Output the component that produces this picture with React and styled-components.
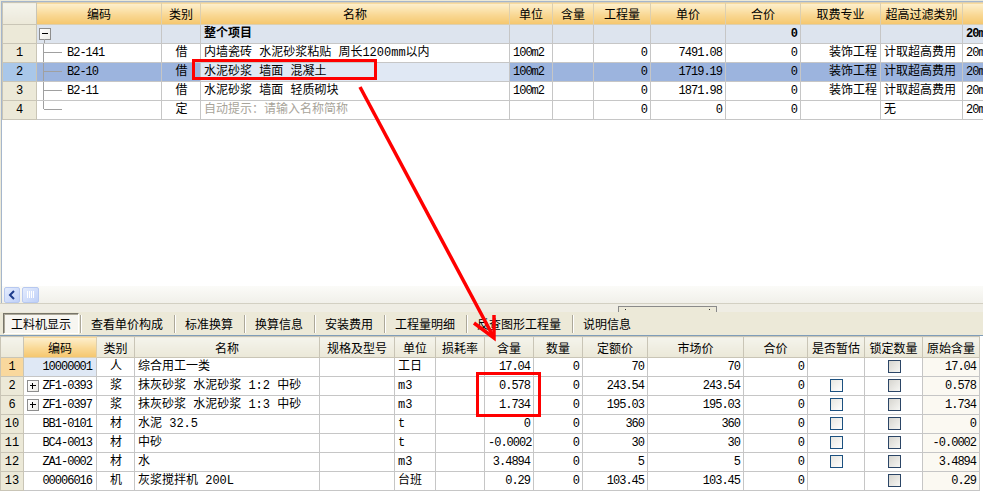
import React from "react";
import styled, { createGlobalStyle, css } from "styled-components";

const GlobalStyle = createGlobalStyle`
  *, *::before, *::after { box-sizing: border-box; }
  html, body { margin: 0; padding: 0; }
  body {
    background: #ece9d8;
    font-family: "Liberation Mono", "Noto Sans CJK SC", monospace;
    font-size: 12px;
    color: #000;
  }
`;

const Screen = styled.div`
  position: relative;
  width: 983px;
  height: 494px;
  overflow: hidden;
  display: flex;
  flex-direction: column;
  background: #ece9d8;
`;

const TopPanel = styled.section`
  height: 302px;
  margin: 1px 0 0 1px;
  display: flex;
  flex-direction: column;
  background: #fff;
  border-top: 1px solid #a5b6cc;
  border-left: 1px solid #a5b6cc;
  overflow: hidden;
`;

const GridArea = styled.div`
  flex: 1;
  overflow: hidden;
  background: #fff;
`;

const Grid = styled.table`
  table-layout: fixed;
  border-collapse: collapse;
  width: ${(p) => p.$width}px;
`;

const Col = styled.col`
  width: ${(p) => p.$w}px;
`;

const HeadRow = styled.tr`
  height: ${(p) => p.$h}px;
`;

const Th = styled.th`
  border: 1px solid ${(p) => (p.$hot ? "#dccfb0" : "#c9c5b6")};
  padding: 0;
  font-family: "Noto Sans CJK SC", sans-serif;
  font-weight: 400;
  font-size: 12px;
  text-align: center;
  white-space: nowrap;
  overflow: hidden;
  background: ${(p) =>
    p.$hot
      ? "linear-gradient(#fdf0cf, #f9d894 55%, #f5c66d)"
      : "linear-gradient(#f5f4ec, #ebe8d8)"};
`;

const tones = {
  group: "#dde4ee",
  selected: "#9cb4de",
};

const Row = styled.tr`
  height: 19px;
  background: ${(p) => tones[p.$tone] || "#fff"};
`;

const RowHead = styled.td`
  border: 1px solid #c9c5b6;
  padding: 0;
  text-align: center;
  line-height: 17px;
  background: ${(p) =>
    ({ selected: "#a9c7e9", active: "#f9d89d" }[p.$tone] || "#ece9d8")};
`;

const Td = styled.td`
  border: 1px solid #c6c6c6;
  padding: 0 ${(p) => (p.$align === "right" ? 3 : 2)}px 0 3px;
  line-height: 17px;
  white-space: nowrap;
  overflow: hidden;
  text-align: ${(p) => p.$align || "left"};
  font-weight: ${(p) => (p.$bold ? 700 : 400)};
  color: ${(p) => (p.$muted ? "#a8a49a" : "#000")};
  letter-spacing: ${(p) => (p.$mono ? "-1px" : "0")};
  background: ${(p) => p.$bg || "transparent"};
`;

const TreeWrap = styled.div`
  display: flex;
  align-items: center;
  height: 18px;
  letter-spacing: -1px;
`;

const Toggle = styled.span`
  position: relative;
  flex: none;
  width: 12px;
  height: 12px;
  margin-left: ${(p) => p.$inset || 0}px;
  border: 1px solid #8d8d8d;
  background: linear-gradient(135deg, #ffffff, #ecebe6);

  &::before {
    content: "";
    position: absolute;
    left: 2px;
    right: 2px;
    top: 4px;
    border-top: 1px solid #000;
  }

  ${(p) =>
    p.$plus
      ? css`
          &::after {
            content: "";
            position: absolute;
            top: 2px;
            bottom: 2px;
            left: 4px;
            border-left: 1px solid #000;
          }
        `
      : css`
          &::after {
            content: "";
            position: absolute;
            left: 4px;
            top: 100%;
            height: 6px;
            border-left: 1px solid #a0a0a0;
          }
        `}
`;

const Branch = styled.span`
  position: relative;
  flex: none;
  align-self: flex-start;
  width: 19px;
  height: ${(p) => (p.$last ? 9 : 19)}px;
  margin: -1px 5px 0 3px;
  border-left: 1px solid #a0a0a0;

  &::after {
    content: "";
    position: absolute;
    left: 0;
    right: 0;
    top: 9px;
    border-top: 1px solid #a0a0a0;
  }
`;

const CodeWrap = styled.div`
  display: flex;
  align-items: center;
  height: 18px;
  letter-spacing: -1px;

  & > span:last-child {
    margin-left: auto;
    padding-right: 2px;
  }
`;

const HScroll = styled.div`
  height: 17px;
  flex: none;
  display: flex;
  align-items: center;
  gap: 2px;
  padding-left: 2px;
  background: linear-gradient(#fbfbf8, #f1f0ea);
`;

const ScrollBtn = styled.div`
  width: ${(p) => p.$w}px;
  height: 16px;
  border: 1px solid #b7c8f0;
  border-radius: 2px;
  background: linear-gradient(135deg, #e4ecfd, #bfd0f8);
  display: flex;
  align-items: center;
  justify-content: center;
`;

const Splitter = styled.div`
  height: 9px;
  flex: none;
  border-top: 1px solid #d3d0c3;
  background: #efede4;
  display: flex;
  align-items: flex-end;
`;

const Grip = styled.div`
  position: relative;
  margin-left: 618px;
  width: 99px;
  height: 6px;
  border: 1px solid #8a8a8a;
  border-bottom: none;
  background: #ece9d8;

  &::before,
  &::after {
    content: "";
    position: absolute;
    top: 2px;
    width: 1px;
    height: 1px;
    background: #333;
  }
  &::before {
    left: 6px;
  }
  &::after {
    right: 6px;
  }
`;

const TabBar = styled.nav`
  height: 23px;
  flex: none;
  display: flex;
  align-items: center;
  padding-left: 3px;
  background: #ece9d8;
`;

const Tab = styled.div`
  height: 18px;
  line-height: 18px;
  padding: 0 11px 0 10px;
  font-family: "Noto Sans CJK SC", sans-serif;
  font-size: 12px;
  white-space: nowrap;
  border-left: 1px solid #aca899;
  box-shadow: inset 1px 0 #fff;

  ${(p) =>
    p.$active &&
    css`
      height: 21px;
      line-height: 19px;
      padding: 0 7px;
      margin-right: 1px;
      background: #f7f6f1;
      border: 1px solid;
      border-color: #77756a #fff #fff #77756a;
      box-shadow: inset 1px 1px #aca899;
    `}
`;

const BottomPanel = styled.section`
  flex: 1;
  overflow: hidden;
  background: #fff;
  border-top: 1px solid #7f9db9;
`;

const Check = styled.span`
  display: inline-block;
  vertical-align: middle;
  width: 13px;
  height: 13px;
  border: 1px solid ${(p) => (p.$locked ? "#2b4566" : "#1c5180")};
  background: ${(p) =>
    p.$locked
      ? "linear-gradient(135deg, #d6d5cf, #f6f6f3)"
      : "linear-gradient(135deg, #e7e6e0, #ffffff)"};
`;

const Overlay = styled.svg`
  position: absolute;
  inset: 0;
  pointer-events: none;
`;

const topCols = [34, 125, 39, 309, 43, 41, 57, 75, 75, 80, 82, 60];
const topHeads = ["", "编码", "类别", "名称", "单位", "含量", "工程量", "单价", "合价", "取费专业", "超高过滤类别", ""];

const topRows = [
  { n: "1", code: "B2-141", kind: "借", name: "内墙瓷砖 水泥砂浆粘贴 周长1200mm以内", unit: "100m2", qty: "0", price: "7491.08", total: "0", major: "装饰工程", filter: "计取超高费用" },
  { n: "2", code: "B2-10", kind: "借", name: "水泥砂浆 墙面 混凝土", unit: "100m2", qty: "0", price: "1719.19", total: "0", major: "装饰工程", filter: "计取超高费用", tone: "selected" },
  { n: "3", code: "B2-11", kind: "借", name: "水泥砂浆 墙面 轻质砌块", unit: "100m2", qty: "0", price: "1871.98", total: "0", major: "装饰工程", filter: "计取超高费用" },
  { n: "4", code: "", kind: "定", name: "自动提示：请输入名称简称", hint: true, unit: "", qty: "0", price: "0", total: "0", major: "", filter: "无", last: true },
];

const botCols = [23, 73, 38, 185, 75, 41, 49, 49, 49, 65, 96, 64, 57, 58, 57];
const botHeads = ["", "编码", "类别", "名称", "规格及型号", "单位", "损耗率", "含量", "数量", "定额价", "市场价", "合价", "是否暂估", "锁定数量", "原始含量"];

const botRows = [
  { n: "1", code: "10000001", kind: "人", name: "综合用工一类", unit: "工日", amt: "17.04", price: "70", market: "70", est: false },
  { n: "2", code: "ZF1-0393", plus: true, kind: "浆", name: "抹灰砂浆 水泥砂浆 1:2 中砂", unit: "m3", amt: "0.578", price: "243.54", market: "243.54", est: true },
  { n: "6", code: "ZF1-0397", plus: true, kind: "浆", name: "抹灰砂浆 水泥砂浆 1:3 中砂", unit: "m3", amt: "1.734", price: "195.03", market: "195.03", est: true },
  { n: "10", code: "BB1-0101", kind: "材", name: "水泥 32.5", unit: "t", amt: "0", price: "360", market: "360", est: true },
  { n: "11", code: "BC4-0013", kind: "材", name: "中砂", unit: "t", amt: "-0.0002", price: "30", market: "30", est: true },
  { n: "12", code: "ZA1-0002", kind: "材", name: "水", unit: "m3", amt: "3.4894", price: "5", market: "5", est: true },
  { n: "13", code: "00006016", kind: "机", name: "灰浆搅拌机 200L", unit: "台班", amt: "0.29", price: "103.45", market: "103.45", est: false },
];

const tabs = ["工料机显示", "查看单价构成", "标准换算", "换算信息", "安装费用", "工程量明细", "反查图形工程量", "说明信息"];

function TopGrid() {
  return (
    <Grid $width={topCols.reduce((a, b) => a + b, 0)}>
      <colgroup>
        {topCols.map((w, i) => (
          <Col key={i} $w={w} />
        ))}
      </colgroup>
      <thead>
        <HeadRow $h={22}>
          {topHeads.map((h, i) => (
            <Th key={i} $hot={i > 0}>
              {h}
            </Th>
          ))}
        </HeadRow>
      </thead>
      <tbody>
        <Row $tone="group">
          <RowHead />
          <Td>
            <TreeWrap>
              <Toggle $inset={-1} />
            </TreeWrap>
          </Td>
          <Td />
          <Td $bold>整个项目</Td>
          <Td />
          <Td />
          <Td />
          <Td />
          <Td $align="right" $bold $mono>0</Td>
          <Td />
          <Td />
          <Td $bold $mono>20m</Td>
        </Row>
        {topRows.map((r) => (
          <Row key={r.n} $tone={r.tone}>
            <RowHead $tone={r.tone}>{r.n}</RowHead>
            <Td>
              <TreeWrap>
                <Branch $last={r.last} />
                <span>{r.code}</span>
              </TreeWrap>
            </Td>
            <Td $align="center">{r.kind}</Td>
            <Td $muted={r.hint} $bg={r.tone === "selected" ? "#e0e8f4" : undefined}>
              {r.name}
            </Td>
            <Td $mono>{r.unit}</Td>
            <Td />
            <Td $align="right" $mono>{r.qty}</Td>
            <Td $align="right" $mono>{r.price}</Td>
            <Td $align="right" $mono>{r.total}</Td>
            <Td $align="right">{r.major}</Td>
            <Td>{r.filter}</Td>
            <Td $mono>20m</Td>
          </Row>
        ))}
      </tbody>
    </Grid>
  );
}

function BottomGrid() {
  return (
    <Grid $width={botCols.reduce((a, b) => a + b, 0)}>
      <colgroup>
        {botCols.map((w, i) => (
          <Col key={i} $w={w} />
        ))}
      </colgroup>
      <thead>
        <HeadRow $h={21}>
          {botHeads.map((h, i) => (
            <Th key={i} $hot={i === 1}>
              {h}
            </Th>
          ))}
        </HeadRow>
      </thead>
      <tbody>
        {botRows.map((r, i) => (
          <Row key={r.n}>
            <RowHead $tone={i === 0 ? "active" : undefined}>{r.n}</RowHead>
            <Td $bg={i === 0 ? "#dfe8f5" : undefined}>
              <CodeWrap>
                {r.plus && <Toggle $plus $inset={0} />}
                <span>{r.code}</span>
              </CodeWrap>
            </Td>
            <Td $align="center">{r.kind}</Td>
            <Td>{r.name}</Td>
            <Td />
            <Td>{r.unit}</Td>
            <Td />
            <Td $align="right" $mono>{r.amt}</Td>
            <Td $align="right" $mono>0</Td>
            <Td $align="right" $mono>{r.price}</Td>
            <Td $align="right" $mono>{r.market}</Td>
            <Td $align="right" $mono>0</Td>
            <Td $align="center">{r.est && <Check />}</Td>
            <Td $align="center">
              <Check $locked />
            </Td>
            <Td $align="right" $mono $bg="#fbf9f2">{r.amt}</Td>
          </Row>
        ))}
      </tbody>
    </Grid>
  );
}

export default function App() {
  return (
    <>
      <GlobalStyle />
      <Screen>
        <TopPanel>
          <GridArea>
            <TopGrid />
          </GridArea>
          <HScroll>
            <ScrollBtn $w={16}>
              <svg width="8" height="10" viewBox="0 0 8 10">
                <path d="M6 1 L2 5 L6 9" fill="none" stroke="#1d3b8c" strokeWidth="2" />
              </svg>
            </ScrollBtn>
            <ScrollBtn $w={17}>
              <svg width="8" height="7" viewBox="0 0 8 7">
                <path d="M0.5 0V7M2.5 0V7M4.5 0V7M6.5 0V7" stroke="#fff" strokeWidth="1" />
              </svg>
            </ScrollBtn>
          </HScroll>
        </TopPanel>
        <Splitter>
          <Grip />
        </Splitter>
        <TabBar>
          {tabs.map((t, i) => (
            <Tab key={t} $active={i === 0}>
              {t}
            </Tab>
          ))}
        </TabBar>
        <BottomPanel>
          <BottomGrid />
        </BottomPanel>
        <Overlay width="983" height="494" viewBox="0 0 983 494">
          <rect x="193.5" y="60.5" width="182" height="18" fill="none" stroke="#f00" strokeWidth="3" />
          <rect x="477.5" y="373.5" width="62" height="42" fill="none" stroke="#f00" strokeWidth="3" />
          <path d="M360 87 L493 336" stroke="#f00" strokeWidth="3.5" />
          <path d="M474 323 L494 338 L494 315" fill="none" stroke="#f00" strokeWidth="3.5" />
        </Overlay>
      </Screen>
    </>
  );
}
